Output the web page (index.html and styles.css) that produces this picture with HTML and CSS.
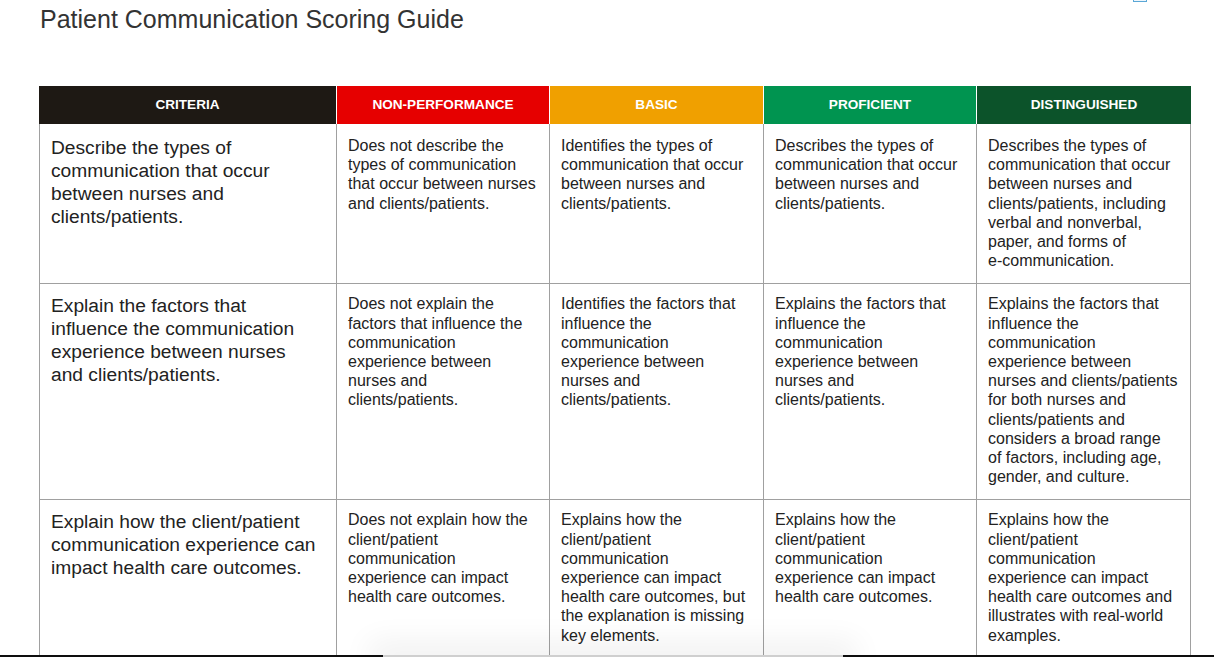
FILE: index.html
```html
<!DOCTYPE html>
<html lang="en">
<head>
<meta charset="utf-8">
<title>Patient Communication Scoring Guide</title>
<link rel="stylesheet" href="styles.css">
</head>
<body>
<span class="corner-icon" aria-hidden="true"></span>
<main class="page">
  <h1 class="title">Patient Communication Scoring Guide</h1>
  <div class="rubric" role="table">
    <div class="row head" role="row">
      <div class="h h-crit" role="columnheader">CRITERIA</div>
      <div class="h h-non" role="columnheader">NON-PERFORMANCE</div>
      <div class="h h-basic" role="columnheader">BASIC</div>
      <div class="h h-prof" role="columnheader">PROFICIENT</div>
      <div class="h h-dist" role="columnheader">DISTINGUISHED</div>
    </div>
    <div class="row r1" role="row">
      <div class="cell crit" role="cell">Describe the types of<br>communication that occur<br>between nurses and<br>clients/patients.</div>
      <div class="cell" role="cell">Does not describe the<br>types of communication<br>that occur between nurses<br>and clients/patients.</div>
      <div class="cell" role="cell">Identifies the types of<br>communication that occur<br>between nurses and<br>clients/patients.</div>
      <div class="cell" role="cell">Describes the types of<br>communication that occur<br>between nurses and<br>clients/patients.</div>
      <div class="cell" role="cell">Describes the types of<br>communication that occur<br>between nurses and<br>clients/patients, including<br>verbal and nonverbal,<br>paper, and forms of<br>e-communication.</div>
    </div>
    <div class="row" role="row">
      <div class="cell crit" role="cell">Explain the factors that<br>influence the communication<br>experience between nurses<br>and clients/patients.</div>
      <div class="cell" role="cell">Does not explain the<br>factors that influence the<br>communication<br>experience between<br>nurses and<br>clients/patients.</div>
      <div class="cell" role="cell">Identifies the factors that<br>influence the<br>communication<br>experience between<br>nurses and<br>clients/patients.</div>
      <div class="cell" role="cell">Explains the factors that<br>influence the<br>communication<br>experience between<br>nurses and<br>clients/patients.</div>
      <div class="cell" role="cell">Explains the factors that<br>influence the<br>communication<br>experience between<br>nurses and clients/patients<br>for both nurses and<br>clients/patients and<br>considers a broad range<br>of factors, including age,<br>gender, and culture.</div>
    </div>
    <div class="row" role="row">
      <div class="cell crit" role="cell">Explain how the client/patient<br>communication experience can<br>impact health care outcomes.</div>
      <div class="cell" role="cell">Does not explain how the<br>client/patient<br>communication<br>experience can impact<br>health care outcomes.</div>
      <div class="cell" role="cell">Explains how the<br>client/patient<br>communication<br>experience can impact<br>health care outcomes, but<br>the explanation is missing<br>key elements.</div>
      <div class="cell" role="cell">Explains how the<br>client/patient<br>communication<br>experience can impact<br>health care outcomes.</div>
      <div class="cell" role="cell">Explains how the<br>client/patient<br>communication<br>experience can impact<br>health care outcomes and<br>illustrates with real-world<br>examples.</div>
    </div>
  </div>
</main>
<div class="dock" aria-hidden="true"><div class="dock-panel"></div></div>
</body>
</html>
```

FILE: styles.css
```css
* {
  box-sizing: border-box;
}

html,
body {
  margin: 0;
  height: 100%;
  overflow: hidden;
}

body {
  position: relative;
  background: #ffffff;
  color: #222222;
  font-family: "Liberation Sans", Arial, Helvetica, sans-serif;
}

.page {
  padding: 4px 0 0 39px;
}

.title {
  margin: 0 0 0 1px;
  font-size: 25px;
  line-height: 30px;
  font-weight: normal;
  color: #333333;
}

.rubric {
  margin-top: 52px;
  width: 1152px;
}

.row {
  display: grid;
  grid-template-columns: 297px 213px 214px 213px 215px;
}

.h {
  height: 38px;
  display: flex;
  align-items: center;
  justify-content: center;
  padding-bottom: 1px;
  color: #ffffff;
  font-weight: bold;
  font-size: 13.6px;
  border-left: 1px solid #ffffff;
}

.h:first-child {
  border-left: 0;
}

.h-crit { background: #1e1914; }
.h-non { background: #e60000; }
.h-basic { background: #f0a000; }
.h-prof { background: #009450; }
.h-dist { background: #0c532a; }

.cell {
  border-left: 1px solid #a0a0a0;
  border-bottom: 1px solid #a0a0a0;
  padding: 10px 10px 13px 11px;
  font-size: 16px;
  line-height: 19.2px;
  color: #222222;
}

.cell:last-child {
  border-right: 1px solid #a0a0a0;
}

.r1 .cell {
  padding-top: 12px;
}

.crit {
  font-size: 19.2px;
  line-height: 23px;
}

.corner-icon {
  position: absolute;
  left: 1133px;
  top: -12px;
  width: 14px;
  height: 14px;
  border: 1px solid #5aa7d6;
  background: #eef6fc;
}

.dock {
  position: fixed;
  left: 0;
  right: 0;
  bottom: 0;
  height: 2px;
  background: #0e0e0e;
}

.dock-panel {
  position: absolute;
  left: 383px;
  width: 460px;
  top: 0;
  height: 2px;
  background: #cfcfcf;
  box-shadow: 0 0 30px 14px rgba(0, 0, 0, 0.06);
}
```
